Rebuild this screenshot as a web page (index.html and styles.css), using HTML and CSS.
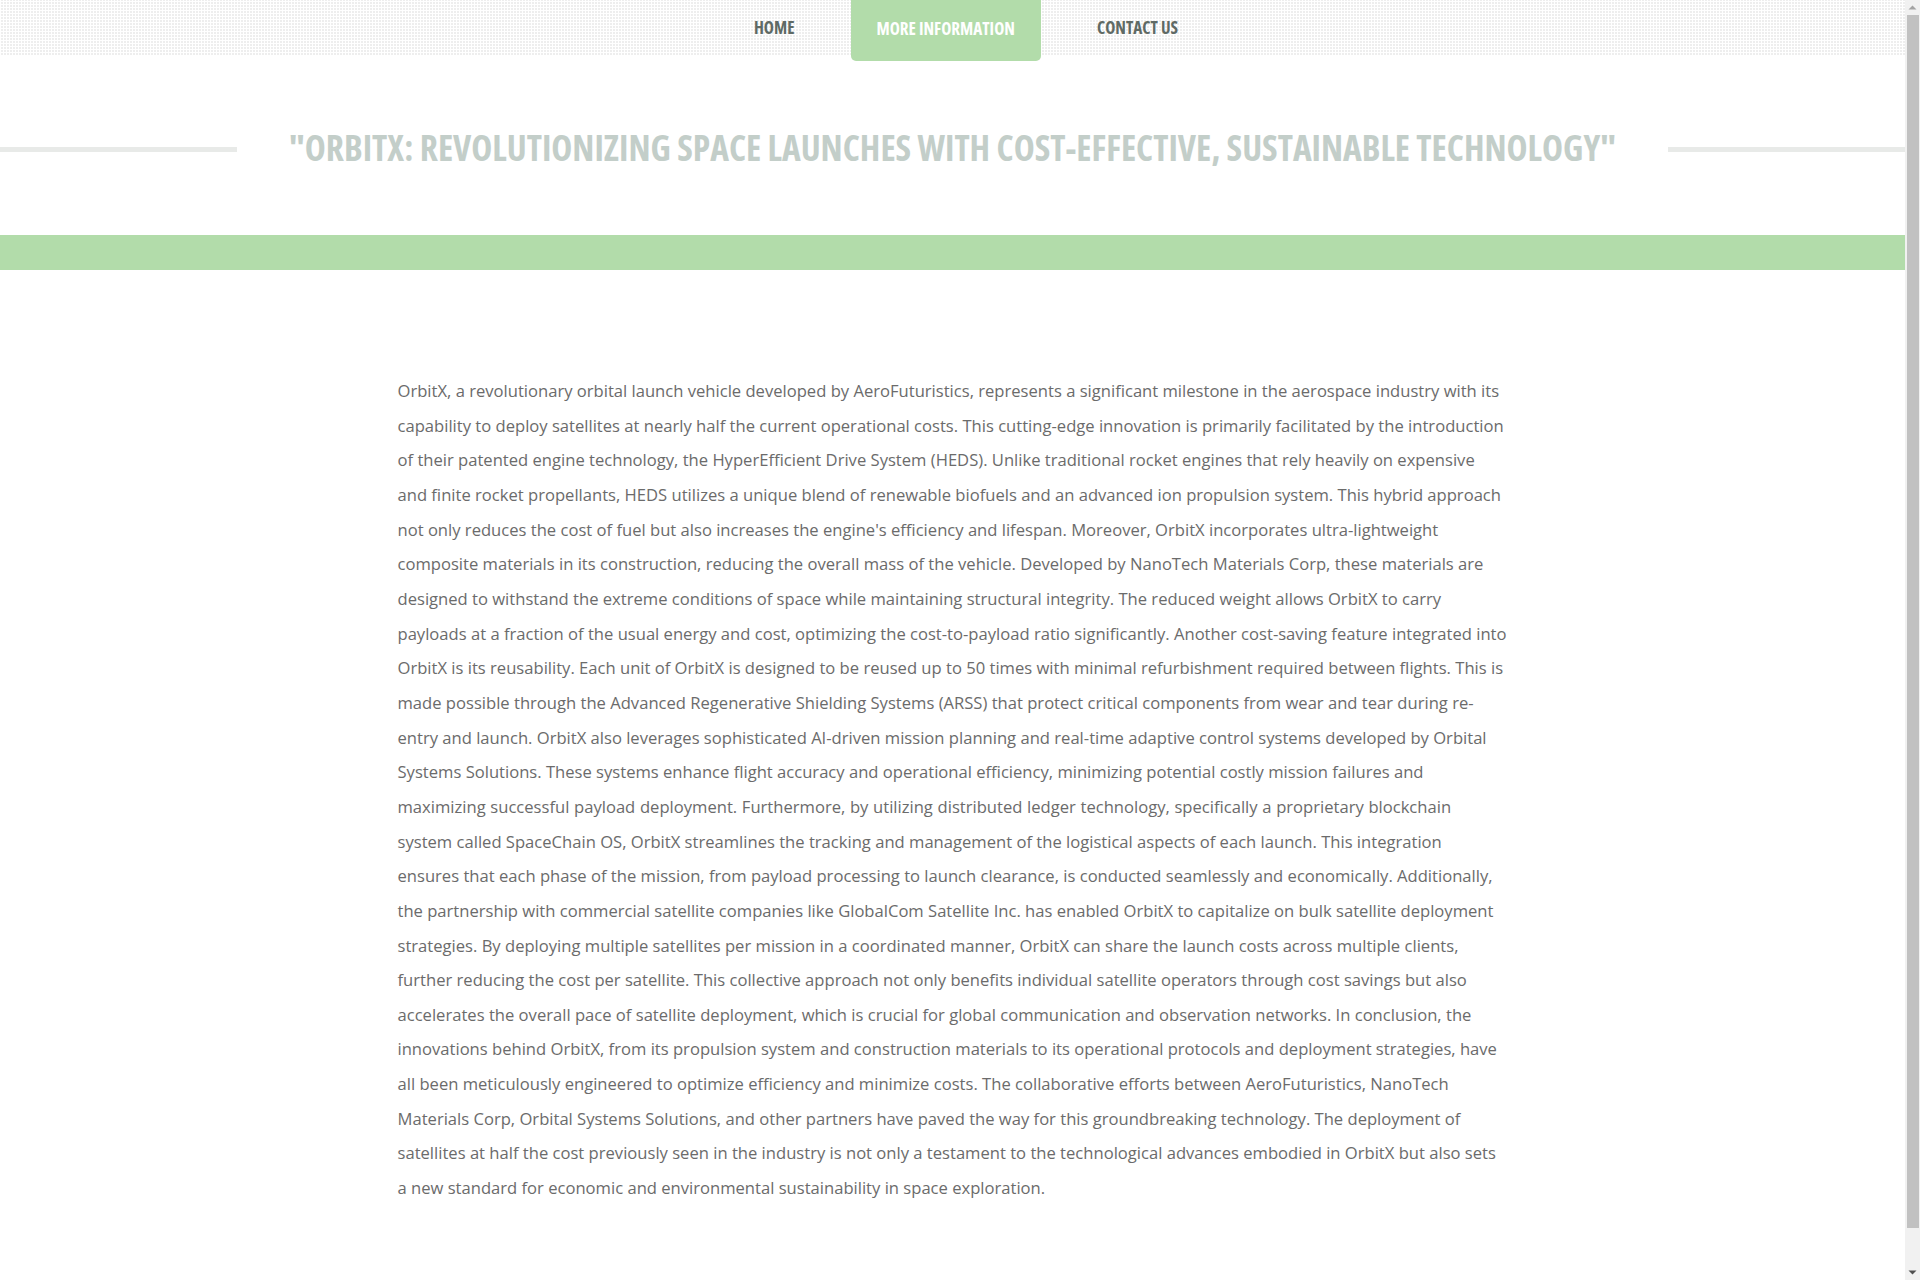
FILE: index.html
```html
<!DOCTYPE html>
<html lang="en">
<head>
<meta charset="utf-8">
<title>OrbitX</title>
<link rel="stylesheet" href="styles.css">
</head>
<body>
<div class="page">
  <header class="topbar">
    <nav class="nav">
      <a class="nav-item" href="#">HOME</a>
      <a class="nav-item active" href="#">MORE INFORMATION</a>
      <a class="nav-item" href="#">CONTACT US</a>
    </nav>
  </header>
  <section class="title-wrap">
    <span class="rule"></span>
    <h1 class="title">"ORBITX: REVOLUTIONIZING SPACE LAUNCHES WITH COST-EFFECTIVE, SUSTAINABLE TECHNOLOGY"</h1>
    <span class="rule"></span>
  </section>
  <div class="band"></div>
  <main class="content">
    <p class="text">OrbitX, a revolutionary orbital launch vehicle developed by AeroFuturistics, represents a significant milestone in the aerospace industry with its capability to deploy satellites at nearly half the current operational costs. This cutting-edge innovation is primarily facilitated by the introduction of their patented engine technology, the HyperEfficient Drive System (HEDS). Unlike traditional rocket engines that rely heavily on expensive and finite rocket propellants, HEDS utilizes a unique blend of renewable biofuels and an advanced ion propulsion system. This hybrid approach not only reduces the cost of fuel but also increases the engine's efficiency and lifespan. Moreover, OrbitX incorporates ultra-lightweight composite materials in its construction, reducing the overall mass of the vehicle. Developed by NanoTech Materials Corp, these materials are designed to withstand the extreme conditions of space while maintaining structural integrity. The reduced weight allows OrbitX to carry payloads at a fraction of the usual energy and cost, optimizing the cost-to-payload ratio significantly. Another cost-saving feature integrated into OrbitX is its reusability. Each unit of OrbitX is designed to be reused up to 50 times with minimal refurbishment required between flights. This is made possible through the Advanced Regenerative Shielding Systems (ARSS) that protect critical components from wear and tear during re-entry and launch. OrbitX also leverages sophisticated AI-driven mission planning and real-time adaptive control systems developed by Orbital Systems Solutions. These systems enhance flight accuracy and operational efficiency, minimizing potential costly mission failures and <span class="loose">maximizing successful payload deployment. Furthermore, by utilizing distributed ledger technology, specifically a proprietary blockchain </span>system called SpaceChain OS, OrbitX streamlines the tracking and management of the logistical aspects of each launch. This integration ensures that each phase of the mission, from payload processing to launch clearance, is conducted seamlessly and economically. Additionally, the partnership with commercial satellite companies like GlobalCom Satellite Inc. has enabled OrbitX to capitalize on bulk satellite deployment strategies. By deploying multiple satellites per mission in a coordinated manner, OrbitX can share the launch costs across multiple clients, further reducing the cost per satellite. This collective approach not only benefits individual satellite operators through cost savings but also accelerates the overall pace of satellite deployment, which is crucial for global communication and observation networks. In conclusion, the innovations behind OrbitX, from its propulsion system and construction materials to its operational protocols and deployment strategies, have all been meticulously engineered to optimize efficiency and minimize costs. The collaborative efforts between AeroFuturistics, NanoTech Materials Corp, Orbital Systems Solutions, and other partners have paved the way for this groundbreaking technology. The deployment of satellites at half the cost previously seen in the industry is not only a testament to the technological advances embodied in OrbitX but also sets a new standard for economic and environmental sustainability in space exploration.</p>
  </main>
</div>
<aside class="scrollbar" aria-hidden="true">
  <span class="sb-btn">
    <svg width="15" height="15" viewBox="0 0 15 15"><path d="M3.5 9.5 L7.5 5.5 L11.5 9.5 Z" fill="#a3a3a3"/></svg>
  </span>
  <span class="sb-track"><span class="sb-thumb"></span></span>
  <span class="sb-btn">
    <svg width="15" height="15" viewBox="0 0 15 15"><path d="M3.5 5.5 L11.5 5.5 L7.5 9.5 Z" fill="#505050"/></svg>
  </span>
</aside>
</body>
</html>
```
FILE: styles.css
```css
html, body {
  margin: 0;
  padding: 0;
  overflow: hidden;
}
body {
  display: flex;
  height: 1280px;
  background: #ffffff;
  font-family: "Open Sans", "Liberation Sans", sans-serif;
}
.page {
  flex: 1 1 auto;
  min-width: 0;
  height: 1280px;
  overflow: hidden;
}
.topbar {
  height: 56px;
  background-color: #eeeeee;
  background-image:
    repeating-linear-gradient(90deg, #ffffff 0 1px, transparent 1px 3px),
    repeating-linear-gradient(0deg, #ffffff 0 1px, transparent 1px 3px);
}
.nav {
  display: flex;
  justify-content: center;
  align-items: flex-start;
  gap: 30px;
  padding-left: 27px;
}
.nav-item {
  display: block;
  height: 56px;
  line-height: 56px;
  padding: 0 26px;
  font-family: "Open Sans", sans-serif;
  font-stretch: 75%;
  font-weight: 700;
  font-size: 17.1px;
  color: #5f6a65;
  text-decoration: none;
}
.nav-item.active {
  height: 61px;
  line-height: 57px;
  background: #b2dcaa;
  color: #ffffff;
  border-radius: 0 0 5px 5px;
}
.title-wrap {
  height: 179px;
  display: flex;
  align-items: center;
  justify-content: space-between;
  box-sizing: border-box;
  padding-top: 2px;
}
.rule {
  flex: 0 0 237px;
  height: 5px;
  background: #e8eae8;
  margin-top: 6px;
}
.title {
  margin: 0;
  font-family: "Open Sans", sans-serif;
  font-stretch: 75%;
  font-weight: 700;
  font-size: 35.5px;
  line-height: 44px;
  color: #c3cec9;
  white-space: nowrap;
  text-align: center;
}
.band {
  height: 35px;
  background: #b2dcaa;
}
.content {
  width: 1110px;
  margin: 0 auto;
  padding-top: 104px;
}
.text {
  margin: 0;
  font-family: "Open Sans", sans-serif;
  font-size: 16.6px;
  line-height: 34.66px;
  color: #6b6b6b;
}
.loose {
  word-spacing: 0.35px;
}
.scrollbar {
  flex: 0 0 15px;
  width: 15px;
  height: 1280px;
  display: flex;
  flex-direction: column;
  background: #f1f1f1;
}
.sb-btn {
  display: block;
  height: 15px;
  flex: 0 0 15px;
}
.sb-btn svg {
  display: block;
}
.sb-track {
  flex: 1 1 auto;
  display: block;
}
.sb-thumb {
  display: block;
  height: 1213px;
  margin: 0 1px 0 2px;
  background: #c1c1c1;
}
```
